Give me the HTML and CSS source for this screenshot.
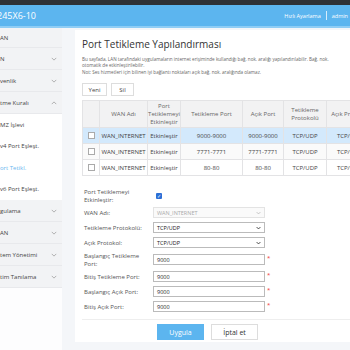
FILE: index.html
```html
<!DOCTYPE html>
<html>
<head>
    <title>Port Tetikleme</title>
    <link rel="stylesheet" href="styles.css">
</head>
<body>
    <div class="topbar"></div>
    <div class="header">
        <span class="model">245X6-10</span>
        <div class="header-links">
            <span>Hızlı Ayarlama</span>
            <span class="sep"></span>
            <span>admin</span>
        </div>
    </div>
    <div class="layout">
        <div class="sidebar">
            <div class="menu-item first">AN</div>
            <div class="menu-item">N <svg class="chev" viewBox="0 0 8 5"><path d="M1 1l3 3 3-3" /></svg></div>
            <div class="menu-item">venlik <svg class="chev" viewBox="0 0 8 5"><path d="M1 1l3 3 3-3" /></svg></div>
            <div class="menu-item">tme Kuralı <svg class="chev" viewBox="0 0 8 5"><path d="M1 4l3-3 3 3" /></svg></div>
            <div class="submenu">
                <div class="sub-item">MZ İşlevi</div>
                <div class="sub-item">v4 Port Eşleşt.</div>
                <div class="sub-item active">ort Tetikl.</div>
                <div class="sub-item">v6 Port Eşleşt.</div>
            </div>
            <div class="menu-item">gulama <svg class="chev" viewBox="0 0 8 5"><path d="M1 1l3 3 3-3" /></svg></div>
            <div class="menu-item">AN <svg class="chev" viewBox="0 0 8 5"><path d="M1 1l3 3 3-3" /></svg></div>
            <div class="menu-item">tem Yönetimi <svg class="chev" viewBox="0 0 8 5"><path d="M1 1l3 3 3-3" /></svg></div>
            <div class="menu-item">tim Tanılama <svg class="chev" viewBox="0 0 8 5"><path d="M1 1l3 3 3-3" /></svg></div>
        </div>
        <div class="main">
            <div class="card">
                <h2>Port Tetikleme Yapılandırması</h2>
                <p class="desc">Bu sayfada, LAN tarafındaki uygulamaların internet erişiminde kullandığı bağ. nok. aralığı yapılandırılabilir. Bağ. nok.<br>otomatik de etkinleştirilebilir.</p>
                <p class="desc note">Not: Ses hizmetleri için bilinen iyi bağlantı noktaları açık bağ. nok. aralığında olamaz.</p>
                <div class="toolbar">
                    <button class="btn-small">Yeni</button>
                    <button class="btn-small">Sil</button>
                </div>
                <table class="rules">
                    <tr>
                        <th class="c-chk"></th>
                        <th class="c-wan">WAN Adı</th>
                        <th class="c-en">Port Tetiklemeyi Etkinleştir</th>
                        <th class="c-tp">Tetikleme Port</th>
                        <th class="c-ap">Açık Port</th>
                        <th class="c-tpr">Tetikleme Protokolü</th>
                        <th class="c-apr">Açık Protokol</th>
                    </tr>
                    <tr class="selected">
                        <td><span class="box"></span></td>
                        <td>WAN_INTERNET</td>
                        <td>Etkinleştir</td>
                        <td>9000-9000</td>
                        <td>9000-9000</td>
                        <td>TCP/UDP</td>
                        <td>TCP/UDP</td>
                    </tr>
                    <tr class="alt">
                        <td><span class="box"></span></td>
                        <td>WAN_INTERNET</td>
                        <td>Etkinleştir</td>
                        <td>7771-7771</td>
                        <td>7771-7771</td>
                        <td>TCP/UDP</td>
                        <td>TCP/UDP</td>
                    </tr>
                    <tr>
                        <td><span class="box"></span></td>
                        <td>WAN_INTERNET</td>
                        <td>Etkinleştir</td>
                        <td>80-80</td>
                        <td>80-80</td>
                        <td>TCP/UDP</td>
                        <td>TCP/UDP</td>
                    </tr>
                </table>
                <div class="form">
                    <label>Port Tetiklemeyi Etkinleştir:</label>
                    <div class="cell"><span class="check">&#10003;</span></div>

                    <label>WAN Adı:</label>
                    <div class="cell"><div class="field disabled">WAN_INTERNET <svg class="arrow" viewBox="0 0 8 5"><path d="M1 1l3 3 3-3" /></svg></div></div>

                    <label>Tetikleme Protokolü:</label>
                    <div class="cell"><div class="field">TCP/UDP <svg class="arrow" viewBox="0 0 8 5"><path d="M1 1l3 3 3-3" /></svg></div></div>

                    <label>Açık Protokol:</label>
                    <div class="cell"><div class="field">TCP/UDP <svg class="arrow" viewBox="0 0 8 5"><path d="M1 1l3 3 3-3" /></svg></div></div>

                    <label>Başlangıç Tetikleme Port:</label>
                    <div class="cell"><div class="field">9000</div><span class="req">*</span></div>

                    <label>Bitiş Tetikleme Port:</label>
                    <div class="cell"><div class="field">9000</div><span class="req">*</span></div>

                    <label>Başlangıç Açık Port:</label>
                    <div class="cell"><div class="field">9000</div><span class="req">*</span></div>

                    <label>Bitiş Açık Port:</label>
                    <div class="cell"><div class="field">9000</div><span class="req">*</span></div>
                </div>
                <div class="actions">
                    <button class="btn-apply">Uygula</button>
                    <button class="btn-cancel">İptal et</button>
                </div>
            </div>
        </div>
    </div>
</body>
</html>
```

FILE: styles.css
```css
body {
    margin: 0;
    width: 350px;
    height: 350px;
    overflow: hidden;
    font-family: "Open Sans", "Noto Sans", sans-serif;
    background-color: #f4f6f9;
}
.topbar {
    height: 5px;
    background-color: #2e3136;
}
.header {
    height: 21px;
    background-color: #5cb5ef;
    display: flex;
    justify-content: space-between;
    align-items: center;
    border-bottom: 2px solid #8fcdf5;
}
.header .model {
    color: white;
    font-size: 9px;
    margin-left: -3px;
}
.header-links {
    display: flex;
    align-items: center;
    gap: 5px;
    color: white;
    font-size: 5.5px;
    margin-right: 2px;
}
.header-links .sep {
    width: 1px;
    height: 9px;
    background-color: #d7ecfb;
}
.layout {
    display: flex;
    width: 440px;
}
.sidebar {
    width: 62px;
    flex-shrink: 0;
    background-color: #fdfdfe;
    height: 330px;
    font-size: 6px;
    color: #444;
}
.menu-item {
    height: 21px;
    display: flex;
    justify-content: space-between;
    align-items: center;
    background-color: #f2f3f5;
    border-bottom: 1px solid #e8e9ec;
    padding-right: 5px;
}
.menu-item.first {
    height: 19px;
}
.chev {
    width: 6px;
    height: 4px;
    fill: none;
    stroke: #999;
    stroke-width: 1;
}
.submenu {
    background-color: white;
}
.sub-item {
    height: 21.5px;
    display: flex;
    align-items: center;
}
.sub-item.active {
    color: #6ab7ef;
}
.main {
    flex: 1;
    padding: 2px 0 0 13px;
}
.card {
    background-color: white;
    padding: 7px 0 5px 7px;
    height: 300px;
}
.card h2 {
    margin: 0;
    font-weight: normal;
    font-size: 10px;
    color: #333;
    line-height: 14px;
}
.desc {
    margin: 5px 0 0;
    font-size: 4.6px;
    line-height: 6px;
    color: #666;
}
.desc.note {
    margin-top: 1px;
}
.toolbar {
    display: flex;
    gap: 4px;
    margin-top: 8px;
}
.btn-small {
    font-family: "Open Sans", sans-serif;
    font-size: 6px;
    color: #444;
    background-color: white;
    border: 1px solid #ddd;
    height: 13px;
    padding: 0;
}
.btn-small:first-child {
    width: 25px;
}
.btn-small:last-child {
    width: 23px;
}
.rules {
    margin-top: 4px;
    border-collapse: collapse;
    font-size: 6px;
    color: #444;
    table-layout: fixed;
    width: 283px;
}
.rules th {
    background-color: #f2f2f3;
    font-weight: normal;
    color: #666;
    height: 26px;
    line-height: 8px;
    padding: 0;
}
.rules th, .rules td {
    border: 1px solid #e3e3e5;
    text-align: center;
}
.rules td {
    height: 15px;
    padding: 0;
}
.rules .c-chk { width: 16px; }
.rules .c-wan { width: 47px; }
.rules .c-en { width: 32px; }
.rules .c-tp { width: 61px; }
.rules .c-ap { width: 40px; }
.rules .c-tpr { width: 42px; }
.rules .c-apr { width: 45px; }
.rules tr.selected td {
    background-color: #d3e9fc;
}
.rules tr.alt td {
    background-color: #fafafa;
}
.box {
    display: inline-block;
    width: 5px;
    height: 5px;
    border: 1px solid #aaa;
    background-color: white;
    vertical-align: middle;
}
.form {
    margin-top: 11px;
    margin-left: 2px;
    display: grid;
    grid-template-columns: 69px 130px;
    grid-template-rows: 18px 15px 15px 15px 19px 15px 15px 15px;
    align-items: center;
    font-size: 6px;
    color: #555;
}
.form label {
    line-height: 8px;
}
.cell {
    display: flex;
    align-items: center;
}
.check {
    display: inline-block;
    width: 6px;
    height: 6px;
    background-color: #2c6fd6;
    color: white;
    font-size: 5px;
    line-height: 6px;
    text-align: center;
    border-radius: 1px;
    margin-left: 3px;
}
.field {
    width: 104px;
    height: 9px;
    border: 1px solid #bbb;
    display: flex;
    justify-content: space-between;
    align-items: center;
    padding: 0 3px;
    font-size: 5.5px;
    color: #222;
}
.field.disabled {
    border-color: #e3e3e3;
    color: #aaa;
    background-color: #fafafa;
}
.arrow {
    width: 5px;
    height: 4px;
    fill: none;
    stroke: #333;
    stroke-width: 1.4;
}
.disabled .arrow {
    stroke: #aaa;
    stroke-width: 1;
}
.req {
    color: #e33;
    font-size: 6px;
    margin-left: 2px;
    align-self: flex-start;
}
.actions {
    border-top: 1px solid #eee;
    margin-top: 5px;
    padding-top: 4px;
    display: flex;
    gap: 7px;
    padding-left: 75px;
}
.btn-apply, .btn-cancel {
    font-family: "Open Sans", sans-serif;
    font-size: 7px;
    width: 47px;
    height: 16px;
}
.btn-apply {
    background-color: #5cb5ef;
    color: white;
    border: none;
}
.btn-cancel {
    background-color: white;
    color: #333;
    border: 1px solid #ddd;
}
```
